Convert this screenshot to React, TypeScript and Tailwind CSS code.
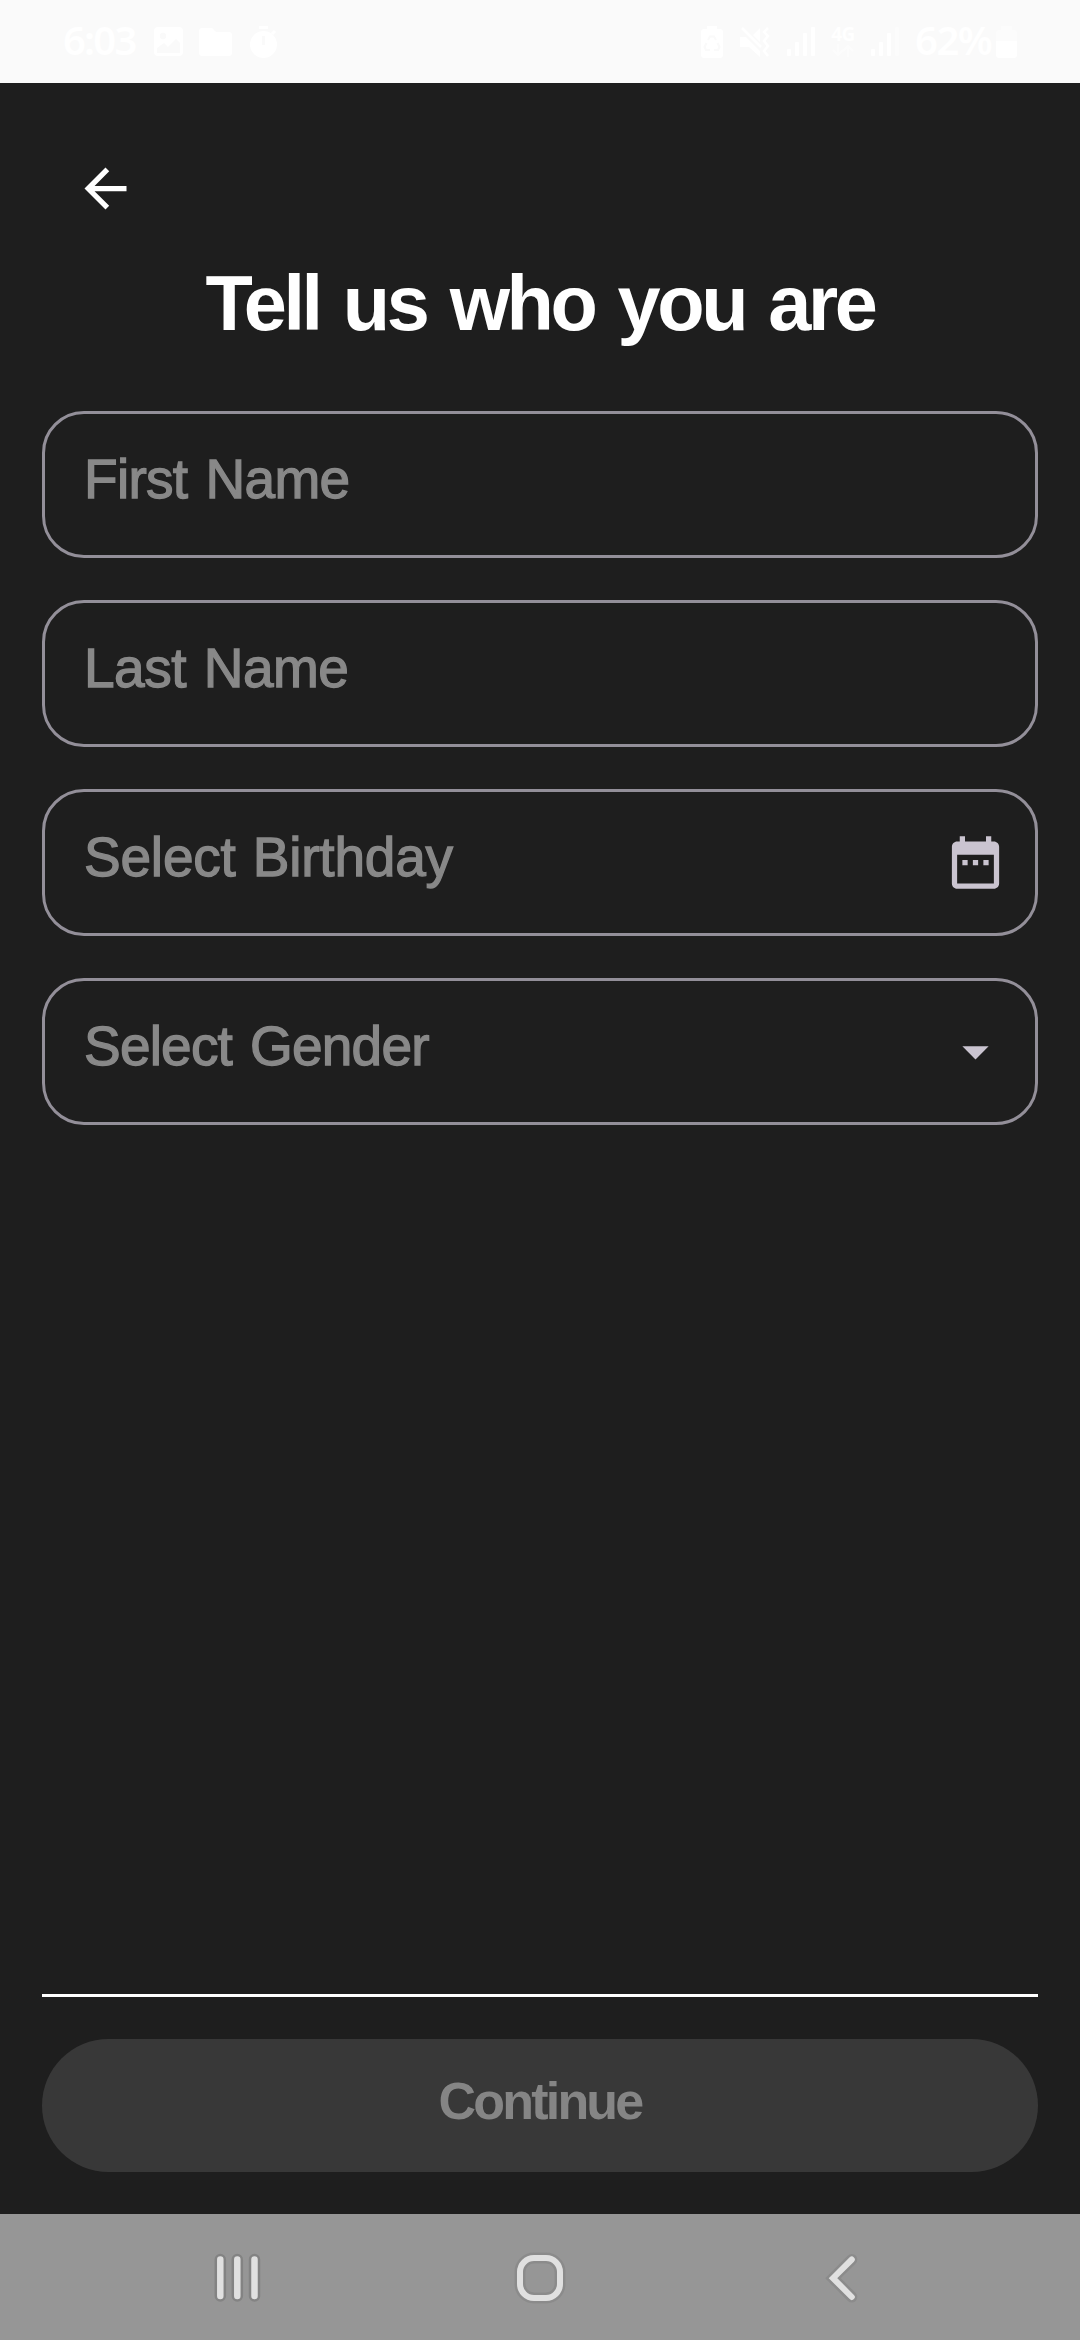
import React from "react";

const BatteryRecycle = () => (
  <svg width="22" height="32" viewBox="0 0 22 32" fill="#fff">
    <path d="M6 0h10v3h3a3 3 0 0 1 3 3v23a3 3 0 0 1-3 3H3a3 3 0 0 1-3-3V6a3 3 0 0 1 3-3h3z" />
    <path d="M7 14l2-3.500h4l2 3.500M16.500 17l2 4-1.500 3h-4M9 24H5l-1.500-3 2-4" fill="none" stroke="#fafafa" strokeWidth="2" />
  </svg>
);

const Muted = () => (
  <svg width="30" height="30" viewBox="0 0 30 30" fill="#fff">
    <path d="M0 10h6l14 14v6L9 20H0zM20 1v14l-7-7z" />
    <path d="M2 1l19 19" stroke="#fff" strokeWidth="2.500" />
    <path d="M28 1l-4 4 4 4-4 5 4 5-4 5 4 5" fill="none" stroke="#fff" strokeWidth="2.500" />
  </svg>
);

const Signal = ({ weak }: { weak?: boolean }) => (
  <svg width="28" height="29" viewBox="0 0 28 29" fill="#fff">
    <rect x="0" y="22" width="4" height="7" rx="1" />
    <rect x="8" y="15" width="4" height="14" rx="1" />
    <rect x="16" y="6" width="4" height="23" rx="1" />
    <rect x="24" y="0" width="4" height="29" rx="1" opacity={weak ? 0.4 : 1} />
  </svg>
);

const StatusBar = () => (
  <header className="flex h-[83px] shrink-0 items-center bg-[#fafafa] pl-[63px] pr-[63px] font-['Noto_Sans',sans-serif] text-white">
    <span className="w-[91px] pb-[3px] text-[40px] leading-[80px] font-semibold tracking-[-1.800px]">6:03</span>
    <svg width="29" height="29" viewBox="0 0 29 29">
      <rect width="29" height="29" rx="4" fill="#fff" />
      <circle cx="9" cy="9" r="3.200" fill="#fafafa" />
      <path d="M3 21l7-5 4 4 8-8 4 4v10H3z" fill="#fafafa" />
    </svg>
    <svg className="ml-4" width="33" height="28" viewBox="0 0 33 28">
      <path d="M3 0h10l4 4h13a3 3 0 0 1 3 3v18a3 3 0 0 1-3 3H3a3 3 0 0 1-3-3V3a3 3 0 0 1 3-3z" fill="#fff" />
    </svg>
    <svg className="ml-[18px]" width="27" height="32" viewBox="0 0 27 32">
      <rect x="9" y="0" width="9" height="3" fill="#fff" />
      <circle cx="13.500" cy="18.500" r="13.500" fill="#fff" />
      <path d="M22 8l3-3" stroke="#fff" strokeWidth="3" />
      <path d="M13.500 10v9" stroke="#fafafa" strokeWidth="3" />
    </svg>
    <div className="ml-auto flex items-center">
      <BatteryRecycle />
      <div className="ml-[17px] flex"><Muted /></div>
      <div className="ml-[17px] flex"><Signal /></div>
      <div className="ml-4 flex w-6 flex-col items-center gap-0.5">
        <span className="text-[19px] leading-4 font-bold tracking-[-0.500px]">4G</span>
        <svg width="22" height="13" viewBox="0 0 22 13" fill="none" stroke="#fff" strokeWidth="2" opacity="0.500">
          <path d="M6 0v11M1 6l5 5 5-5M16 13V2M11 7l5-5 5 5" />
        </svg>
      </div>
      <div className="ml-4 flex"><Signal weak /></div>
      <span className="ml-[16px] w-[79px] pb-[3px] text-[40px] leading-[80px] font-semibold tracking-[-1.500px]">62%</span>
      <svg className="ml-[2px]" width="21" height="32" viewBox="0 0 21 32" fill="#fff">
        <path d="M5 0h11v4h2a3 3 0 0 1 3 3v8H0V7a3 3 0 0 1 3-3h2z" opacity="0.400" />
        <path d="M0 15h21v14a3 3 0 0 1-3 3H3a3 3 0 0 1-3-3z" />
      </svg>
    </div>
  </header>
);

type FieldProps = { label: string; spacing: string; children?: React.ReactNode };

const Field = ({ label, spacing, children }: FieldProps) => (
  <div className="flex h-[147px] items-center justify-between rounded-[42px] border-[3px] border-[#938f99] pr-7 pl-[39px]">
    <span
      className={`pb-[11px] text-[55px] leading-[64px] whitespace-nowrap text-[#888888] [-webkit-text-stroke:1.300px_#888888] ${spacing}`}
    >
      {label}
    </span>
    {children}
  </div>
);

const NavBar = () => (
  <nav className="flex h-[126px] shrink-0 items-center justify-between bg-[#969696] px-[210px] pt-[2px]">
    <svg width="56" height="56" viewBox="0 0 56 56" strokeLinecap="round">
      <path d="M10.300 9.500v36.500M27.300 9.500v36.500M44.500 9.500v36.500" stroke="#838383" strokeWidth="11.500" />
      <path d="M10.300 9.500v36.500M27.300 9.500v36.500M44.500 9.500v36.500" stroke="#e0e0e0" strokeWidth="6.500" />
    </svg>
    <svg width="56" height="56" viewBox="0 0 56 56" fill="none">
      <rect x="8" y="8" width="40" height="40" rx="14" stroke="#8b8b8b" strokeWidth="11" />
      <rect x="8" y="8" width="40" height="40" rx="14" stroke="#e0e0e0" strokeWidth="6" />
    </svg>
    <svg width="56" height="56" viewBox="0 0 56 56" fill="none" strokeLinecap="round">
      <path d="M37.800 9.500L19 28.200l18.800 18.800" stroke="#8b8b8b" strokeWidth="11" />
      <path d="M37.800 9.500L19 28.200l18.800 18.800" stroke="#e0e0e0" strokeWidth="6" />
    </svg>
  </nav>
);

export default function App() {
  return (
    <div className="flex h-[2340px] w-[1080px] flex-col overflow-hidden bg-[#1e1e1e] font-['Liberation_Sans',Arial,sans-serif]">
      <StatusBar />
      <main className="flex flex-1 flex-col px-[42px] pt-[74px] pb-[42px]">
        <button className="ml-8 size-[63px]" aria-label="Back">
          <svg width="63" height="63" viewBox="0 0 24 24" fill="#fff">
            <path d="M20 11H7.830l5.590-5.590L12 4l-8 8 8 8 1.410-1.410L7.830 13H20v-2z" />
          </svg>
        </button>
        <h1 className="mt-[38px] text-center text-[77.500px] leading-[90px] font-bold tracking-[-3.400px] [word-spacing:5px] whitespace-nowrap text-white">
          Tell us who you are
        </h1>
        <form className="mt-[63px] flex flex-col gap-[42px]">
          <Field label="First Name" spacing="tracking-[-0.700px] [word-spacing:3.500px]" />
          <Field label="Last Name" spacing="tracking-[-0.500px] [word-spacing:3px]" />
          <Field label="Select Birthday" spacing="tracking-[-0.200px] [word-spacing:2px]">
            <svg width="63" height="63" viewBox="0 0 24 24" fill="#cac4d0">
              <path d="M9 11H7v2h2v-2zm4 0h-2v2h2v-2zm4 0h-2v2h2v-2zm2-7h-1V2h-2v2H8V2H6v2H5c-1.110 0-1.990.900-1.990 2L3 20c0 1.100.890 2 2 2h14c1.100 0 2-.900 2-2V6c0-1.100-.900-2-2-2zm0 16H5V9h14v11z" />
            </svg>
          </Field>
          <Field label="Select Gender" spacing="tracking-[-0.800px] [word-spacing:3.500px]">
            <svg width="63" height="63" viewBox="0 0 24 24" fill="#cac4d0">
              <path d="M7 10l5 5 5-5z" />
            </svg>
          </Field>
        </form>
        <div className="mt-auto h-[3px] bg-white" />
        <button className="mt-[42px] h-[133px] rounded-full bg-[#383838] pb-[10px] text-[52px] leading-[60px] font-bold tracking-[-2.800px] text-[#858585]">
          Continue
        </button>
      </main>
      <NavBar />
    </div>
  );
}
